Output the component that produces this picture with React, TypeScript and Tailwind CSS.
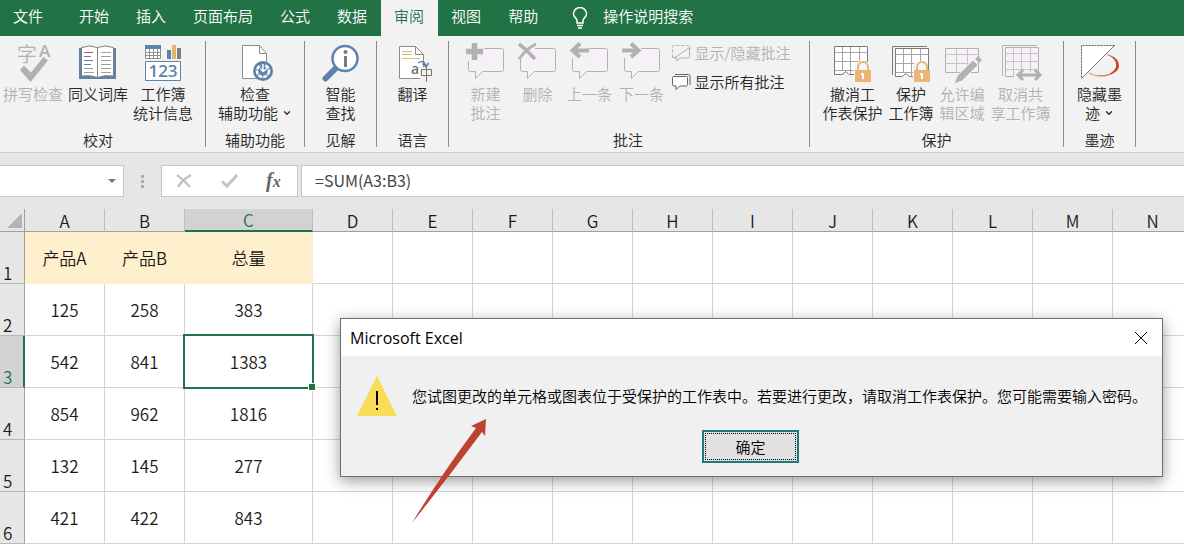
import React from 'react';
import { ChevronDown } from 'lucide-react';

const BLUE = '#5b83ab';
const GRAY = '#b1b1b1';

/* ---------- Ribbon icons ---------- */

const Icon: React.FC<{ children: React.ReactNode }> = ({ children }) => (
  <svg viewBox="0 0 40 40" className="w-10 h-10 shrink-0 overflow-visible" fill="none" aria-hidden="true">
    {children}
  </svg>
);

const SpellingIcon = () => (
  <Icon>
    <text x="4" y="19" fontSize="20" fill={GRAY} fontFamily="Noto Sans CJK SC, sans-serif">字</text>
    <text x="26" y="14" fontSize="17" fontWeight="600" fill={GRAY} fontFamily="Open Sans, sans-serif">A</text>
    <path d="M7 27l4-4.5 7 7L30.5 14l4.5 3.5L17.5 39z" fill={GRAY} />
  </Icon>
);

const ThesaurusIcon = () => (
  <Icon>
    <path d="M1 5h3v28h14l1.500 1 1.500-1h14V5h3v31H1z" fill={BLUE} />
    <path d="M3.500 4.500Q12 1.500 19.500 4.500Q27 1.500 35.500 4.500V33Q27 31.500 19.500 34.500Q12 31.500 3.500 33z" fill="#fff" stroke="#808080" />
    <path d="M19.500 4.500v30" stroke="#808080" />
    <path d="M6 9.500h9" stroke="#c0562f" />
    <path d="M6 13.500h7M6 17.500h9M6 21.500h7" stroke={BLUE} />
    <path d="M6 25.500h9M6 29.500h10M23 9.500h10M23 13.500h10M23 17.500h10M23 21.500h10M23 25.500h10M23 29.500h10" stroke="#a0a0a0" />
  </Icon>
);

const StatsIcon = () => (
  <Icon>
    <path d="M2.500 2.500h15v13h-15zM2.500 9.500h15M2.500 12.500h15M6.500 3v12M10.500 3v12M14.500 3v12" fill="#fff" stroke="#909090" />
    <path d="M2 2h16v4H2z" fill={BLUE} />
    <path d="M24 7h4v9h-4z" fill={BLUE} />
    <path d="M29 2h4v14h-4z" fill="#e8b170" />
    <path d="M34 5h4v11h-4z" fill="#808080" />
    <path d="M2.500 18.500h35v19h-35z" fill="#fff" stroke={BLUE} />
    <text x="20" y="34" fontSize="17" fontWeight="600" textAnchor="middle" fill={BLUE} fontFamily="Open Sans, sans-serif">123</text>
  </Icon>
);

const AccessibilityIcon = () => (
  <Icon>
    <path d="M7.500 2.500h17l7 8v25h-24z" fill="#fff" stroke="#8a8a8a" />
    <path d="M24.500 2.500v8h7" stroke="#8a8a8a" />
    <circle cx="28" cy="28" r="10" fill={BLUE} />
    <circle cx="28" cy="28" r="6" stroke="#fff" strokeWidth="2.500" strokeDasharray="4 1" />
    <path d="M24 19l4 8 3-8" fill={BLUE} />
    <path d="M28 21v7M25.500 25.500l2.500 3 4-3" stroke="#fff" strokeWidth="1.500" />
  </Icon>
);

const SmartLookupIcon = () => (
  <Icon>
    <path d="M4.500 35.500L15 25" stroke={BLUE} strokeWidth="6" strokeLinecap="round" />
    <circle cx="24" cy="15.500" r="12.500" fill="#fff" stroke={BLUE} strokeWidth="2.500" />
    <circle cx="24.500" cy="9" r="2" fill="#7a7a7a" />
    <path d="M24.500 13v11" stroke="#7a7a7a" strokeWidth="3" />
  </Icon>
);

const TranslateIcon = () => (
  <Icon>
    <path d="M6.500 3.500h16l8 8v24h-24z" fill="#fff" stroke="#8a8a8a" />
    <path d="M22.500 3.500v8h8" stroke="#8a8a8a" />
    <path d="M9 8.500h10M9 11.500h10M9 15.500h18" stroke="#e0b878" />
    <path d="M27 24h13v15H27z" fill="#f2f2f2" />
    <text x="18" y="31" fontSize="14" fontWeight="600" fill="#707070" fontFamily="Open Sans, sans-serif">a</text>
    <path d="M28.500 26.500h10v6h-10zM33.500 23v16" stroke="#7c7565" />
    <path d="M25 20q6-4 8 3M29.500 20.500l3.500 3.500 2.500-4" stroke={BLUE} strokeWidth="1.500" />
  </Icon>
);

const Bubble = () => (
  <path d="M4.500 5.500h31q2 0 2 2v19q0 2-2 2h-19l-7 7v-7h-5q-2 0-2-2v-19q0-2 2-2z" fill="#f5f1f7" stroke={GRAY} />
);

const NewCommentIcon = () => (
  <Icon>
    <Bubble />
    <path d="M0 3h18v15H0z" fill="#f2f2f2" />
    <path d="M8.500 0v17M0 8.500h17" stroke={GRAY} strokeWidth="5.500" />
  </Icon>
);

const DeleteCommentIcon = () => (
  <Icon>
    <Bubble />
    <path d="M1 3h16v12H1z" fill="#f2f2f2" />
    <path d="M1 1q8 6 16 15" stroke={GRAY} strokeWidth="3.500" />
    <path d="M18 1Q8 6 1 16" stroke={GRAY} strokeWidth="3" />
  </Icon>
);

const PreviousIcon = () => (
  <Icon>
    <Bubble />
    <path d="M0 4h19v11H0z" fill="#f2f2f2" />
    <path d="M19 7.500H3M10 .5L2.500 7.500l7.500 6.500" stroke={GRAY} strokeWidth="4" />
  </Icon>
);

const NextIcon = () => (
  <Icon>
    <Bubble />
    <path d="M0 4h19v11H0z" fill="#f2f2f2" />
    <path d="M0 7.500h16M9 .5l7.500 7L9 14" stroke={GRAY} strokeWidth="4" />
  </Icon>
);

const Lock = () => (
  <>
    <path d="M26 28v-4a5 5 0 0 1 10 0v4" stroke="#ecb476" strokeWidth="2" />
    <path d="M23 27h16v12H23z" fill="#ecb476" />
    <path d="M29 30h3v6h-2v-4h-1z" fill="#fff" />
  </>
);

const UnprotectSheetIcon = () => (
  <Icon>
    <path d="M2.500 3.500h33v28H17l-3-3-4 3H2.500z" fill="#fff" stroke="#7a7a7a" />
    <path d="M2.500 9.500h33M2.500 18.500h33M2.500 27.500h33M10.500 4v24M18.500 4v27M27.500 4v27" stroke="#a5a5a5" />
    <path d="M22 29v-7q2-4 9-4t6 4v14H22z" fill="#f6f6f6" />
    <Lock />
  </Icon>
);

const ProtectBookIcon = () => (
  <Icon>
    <path d="M1.500 32V3.500H36" stroke="#7a7a7a" />
    <path d="M4.500 5.500h33v28H18l-3-3-4 3H4.500z" fill="#fff" stroke="#7a7a7a" />
    <path d="M4.500 11.500h33M4.500 20.500h33M4.500 29.500h33M12.500 6v24M20.500 6v27M29.500 6v27" stroke="#a5a5a5" />
    <path d="M22 29v-7q2-4 9-4t6 4v14H22z" fill="#f6f6f6" />
    <Lock />
  </Icon>
);

const EditRangesIcon = () => (
  <Icon>
    <path d="M3.500 5.500h33v24h-33z" fill="#f5f1f7" stroke={GRAY} />
    <path d="M3.500 11.500h33M3.500 20.500h33M14.500 6v23M25.500 6v23" stroke="#c4c4c4" />
    <path d="M12 41l3-8L31 17l5 5-16 16z" fill={GRAY} stroke="#f2f2f2" />
    <path d="M33 16l3-3 4 4-3 3z" fill={GRAY} />
  </Icon>
);

const UnshareIcon = () => (
  <Icon>
    <path d="M1.500 33V2.500H36" stroke={GRAY} />
    <path d="M4.500 4.500h33v29h-33z" fill="#f5f1f7" stroke={GRAY} />
    <path d="M4.500 10.500h33M4.500 18.500h33M4.500 26.500h33M12.500 5v28M20.500 5v28M29.500 5v28" stroke="#c8c4ca" />
    <path d="M13 29h26v8H13z" fill="#f2f2f2" />
    <path d="M17 32h22M22 27l-5 5 5 5M34 27l5 5-5 5" stroke={GRAY} strokeWidth="3" />
  </Icon>
);

const HideInkIcon = () => (
  <Icon>
    <path d="M27 11q13 3 13 12c0 8-16 14-31 7 16 6 26 0 28-6 1-6-3-10-10-13z" fill="#c8452a" />
    <path d="M10 30q12 6 22 1" stroke="#e39a5f" />
    <path d="M2.500 2.500h33l-33 33z" fill="#fff" />
    <path d="M35.500 2.500h-33v33" stroke="#555" strokeDasharray="2 1" />
    <path d="M35.500 2.500l-33 33" stroke="#777" />
  </Icon>
);

/* ---------- Ribbon parts ---------- */

interface RibbonButtonProps {
  icon: React.ReactNode;
  lines: string[];
  disabled?: boolean;
  dropdown?: boolean;
  className?: string;
}

const RibbonButton: React.FC<RibbonButtonProps> = ({ icon, lines, disabled, dropdown, className = '' }) => (
  <button
    type="button"
    disabled={disabled}
    className={`flex flex-col items-center shrink-0 text-[15px] leading-[19px] whitespace-nowrap ${
      disabled ? 'text-[#b1b1b1]' : 'text-[#262626]'
    } ${className}`}
  >
    {icon}
    <span className="mt-px">{lines[0]}</span>
    {lines[1] && (
      <span className="flex items-center gap-1">
        {lines[1]}
        {dropdown && <ChevronDown className="w-2.5 h-2.5" strokeWidth={3} />}
      </span>
    )}
  </button>
);

interface GroupProps {
  title: string;
  className: string;
  children: React.ReactNode;
}

const Group: React.FC<GroupProps> = ({ title, className, children }) => (
  <section className={`flex flex-col items-center justify-between shrink-0 border-r border-[#8a8a8a] pt-0.5 ${className}`}>
    <div className="flex items-start">{children}</div>
    <h2 className="text-[15px] leading-[15px] font-[350] text-[#262626] whitespace-nowrap">{title}</h2>
  </section>
);

const TABS = ['开始', '插入', '页面布局', '公式', '数据', '审阅', '视图', '帮助'];

const TabBar = () => (
  <nav className="flex items-stretch h-9 bg-[#217346] text-white text-[15px] whitespace-nowrap overflow-hidden">
    <button type="button" className="px-[13px] pb-1 mr-2.5">文件</button>
    {TABS.map((tab) => (
      <button
        key={tab}
        type="button"
        className={`pl-[13px] pr-[14px] pb-1 ${tab === '审阅' ? 'bg-[#f2f2f2] text-[#217346]' : ''}`}
      >
        {tab}
      </button>
    ))}
    <button type="button" className="flex items-center gap-[15px] ml-5 pb-1">
      <svg viewBox="0 0 16 22" className="w-4 h-[22px] mt-1" fill="none" stroke="#fff" strokeWidth="1.500" aria-hidden="true">
        <path d="M5 16v-2.500C5 11 1.500 10.500 1.500 7a6.500 6.500 0 0 1 13 0c0 3.500-3.500 4-3.500 6.500V16zM5 18.500h6M6 21h4" />
      </svg>
      操作说明搜索
    </button>
  </nav>
);

const Ribbon = () => (
  <div className="flex items-stretch h-[117px] pt-[5px] pb-[5px] bg-[#f2f2f2] border-b border-[#cfcfcf] overflow-hidden">
    <Group title="校对" className="w-[206px] pl-[3px] pr-3">
      <div className="flex gap-[5px]">
        <RibbonButton icon={<SpellingIcon />} lines={['拼写检查']} disabled />
        <RibbonButton icon={<ThesaurusIcon />} lines={['同义词库']} />
        <RibbonButton icon={<StatsIcon />} lines={['工作簿', '统计信息']} />
      </div>
    </Group>
    <Group title="辅助功能" className="w-[99px]">
      <RibbonButton icon={<AccessibilityIcon />} lines={['检查', '辅助功能']} dropdown />
    </Group>
    <Group title="见解" className="w-[72px]">
      <RibbonButton icon={<SmartLookupIcon />} lines={['智能', '查找']} />
    </Group>
    <Group title="语言" className="w-[72px]">
      <RibbonButton icon={<TranslateIcon />} lines={['翻译']} />
    </Group>
    <Group title="批注" className="w-[361px] pr-0.5">
      <div className="flex pr-1.5">
        <RibbonButton icon={<NewCommentIcon />} lines={['新建', '批注']} disabled className="w-[52px]" />
        <RibbonButton icon={<DeleteCommentIcon />} lines={['删除']} disabled className="w-[52px]" />
        <RibbonButton icon={<PreviousIcon />} lines={['上一条']} disabled className="w-[52px]" />
        <RibbonButton icon={<NextIcon />} lines={['下一条']} disabled className="w-[52px]" />
        <div className="flex flex-col items-start gap-[9px] pl-1 text-[15px] leading-5 whitespace-nowrap">
          <button type="button" disabled className="flex items-center gap-1 text-[#b1b1b1]">
            <svg viewBox="0 0 19 16" className="w-[19px] h-4" fill="none" stroke={GRAY} aria-hidden="true">
              <path d="M17.500 3v9q0 1-1 1H8l-3 3v-3H2.500" fill="#f5f1f7" />
              <path d="M.5 12.500V2q0-1.500 1.500-1.500h16v3M.5 12.500h4" strokeDasharray="3 2" />
              <path d="M3 12.500L17.500 2.500" />
            </svg>
            显示/隐藏批注
          </button>
          <button type="button" className="flex items-center gap-1 text-[#262626]">
            <svg viewBox="0 0 19 16" className="w-[19px] h-4" fill="none" stroke="#666" aria-hidden="true">
              <path d="M3 .5h13.500q1.500 0 1.500 1.500v9" />
              <path d="M2 2.500h12.500q1 0 1 1v7q0 1.500-1 1.500H8l-4 3.500V12H2Q.5 12 .5 10.500v-7q0-1 1.500-1z" fill="#fff" />
            </svg>
            显示所有批注
          </button>
        </div>
      </div>
    </Group>
    <Group title="保护" className="w-[254px]">
      <div className="flex gap-1.5">
        <RibbonButton icon={<UnprotectSheetIcon />} lines={['撤消工', '作表保护']} />
        <RibbonButton icon={<ProtectBookIcon />} lines={['保护', '工作簿']} />
        <RibbonButton icon={<EditRangesIcon />} lines={['允许编', '辑区域']} disabled />
        <RibbonButton icon={<UnshareIcon />} lines={['取消共', '享工作簿']} disabled />
      </div>
    </Group>
    <Group title="墨迹" className="w-[72px]">
      <RibbonButton icon={<HideInkIcon />} lines={['隐藏墨', '迹']} dropdown />
    </Group>
  </div>
);

const FormulaBar = () => (
  <div className="flex items-stretch h-14 pt-3 pb-3 bg-[#e6e6e6]">
    <div className="flex items-center w-[124px] shrink-0 bg-white border border-l-0 border-[#c6c6c6]">
      <input aria-label="名称框" className="flex-1 min-w-0 px-2 outline-none" />
      <button type="button" aria-label="展开名称框" className="px-[7px]">
        <svg viewBox="0 0 8 4" className="w-2 h-1" aria-hidden="true">
          <path d="M0 0h8L4 4z" fill="#777" />
        </svg>
      </button>
    </div>
    <div className="flex flex-col items-center justify-center gap-[2px] w-[37px] shrink-0">
      <span className="w-[3px] h-[3px] bg-[#adadad]" />
      <span className="w-[3px] h-[3px] bg-[#adadad]" />
      <span className="w-[3px] h-[3px] bg-[#adadad]" />
    </div>
    <div className="flex items-center justify-around w-[137px] shrink-0 mr-[3px] pr-0.5 bg-white border border-[#c6c6c6]">
      <button type="button" aria-label="取消">
        <svg viewBox="0 0 16 14" className="w-4 h-3.5" fill="none" stroke="#bdbdbd" strokeWidth="2" aria-hidden="true">
          <path d="M1 1q7 5 13 12M15 1Q7 5 2 13" />
        </svg>
      </button>
      <button type="button" aria-label="输入">
        <svg viewBox="0 0 17 14" className="w-[17px] h-3.5" fill="none" stroke="#c4c4c4" strokeWidth="3" aria-hidden="true">
          <path d="M1 7.500l5 4.500L16 1" />
        </svg>
      </button>
      <button type="button" aria-label="插入函数" className="font-['Liberation_Serif',serif] italic font-bold text-xl leading-6 text-[#666]">
        f<span className="text-base">x</span>
      </button>
    </div>
    <input
      aria-label="编辑栏"
      defaultValue="=SUM(A3:B3)"
      className="flex-1 min-w-0 px-[13px] pb-0.5 bg-white border border-r-0 border-[#c6c6c6] text-base font-normal text-[#444] outline-none"
    />
  </div>
);

/* ---------- Sheet ---------- */

const COLUMNS = ['A', 'B', 'C', 'D', 'E', 'F', 'G', 'H', 'I', 'J', 'K', 'L', 'M', 'N'];

const ROWS = [
  ['产品A', '产品B', '总量'],
  ['125', '258', '383'],
  ['542', '841', '1383'],
  ['854', '962', '1816'],
  ['132', '145', '277'],
  ['421', '422', '843'],
];

const Sheet = () => (
  <table className="table-fixed w-[1193px] border-separate border-spacing-0 text-[17px] leading-6 text-[#1a1a1a]">
    <colgroup>
      <col className="w-[25px]" />
      {COLUMNS.map((c) => (
        <col key={c} className={c === 'C' ? 'w-32' : 'w-20'} />
      ))}
    </colgroup>
    <thead>
      <tr className="h-[23px] leading-[21px]">
        <th className="p-0 bg-[#e6e6e6] border-r border-b border-[#a0a0a0]">
          <svg viewBox="0 0 15 15" className="w-[15px] h-[15px] ml-auto mr-0.5" aria-hidden="true">
            <path d="M15 0v15H0z" fill="#b4b4b8" />
          </svg>
        </th>
        {COLUMNS.map((c) => (
          <th
            key={c}
            scope="col"
            className={`p-0 font-[350] border-r border-r-[#bdbdbd] ${
              c === 'C' ? 'bg-[#d2d2d2] text-[#217346] border-b-2 border-b-[#217346]' : 'bg-[#e6e6e6] border-b border-b-[#a0a0a0]'
            }`}
          >
            {c}
          </th>
        ))}
      </tr>
    </thead>
    <tbody>
      {ROWS.map((row, r) => (
        <tr key={r} className="h-[52px]">
          <th
            scope="row"
            className={`p-0 pl-[3px] align-bottom text-left font-[350] leading-5 border-b border-b-[#b8b8b8] ${
              r === 2 ? 'bg-[#d2d2d2] text-[#217346] border-r-2 border-r-[#217346]' : 'bg-[#e6e6e6] border-r border-r-[#a0a0a0]'
            }`}
          >
            {r + 1}
          </th>
          {COLUMNS.map((c, i) => {
            const filled = r === 0 && i < 3;
            const selected = r === 2 && i === 2;
            return (
              <td
                key={c}
                className={`relative p-0 text-center border-r border-b ${
                  filled ? 'bg-[#fff0cd] border-[#fff0cd]' : 'border-[#d4d4d4]'
                }`}
              >
                {row[i]}
                {selected && (
                  <>
                    <span className="absolute z-10 -inset-0.5 border-2 border-[#217346]" />
                    <span className="absolute z-10 -right-[3px] -bottom-[3px] w-1.5 h-1.5 bg-[#217346] outline outline-white" />
                  </>
                )}
              </td>
            );
          })}
        </tr>
      ))}
    </tbody>
  </table>
);

const AlertDialog = () => (
  <div
    role="alertdialog"
    aria-labelledby="alert-title"
    aria-describedby="alert-text"
    className="absolute z-20 left-[340px] top-[318px] w-[823px] border border-[#6e6e6e] bg-[#f0f0f0] text-black shadow-[0_4px_14px_rgba(0,0,0,0.4)]"
  >
    <div className="flex items-center justify-between h-[37px] pl-[9px] pr-3.5 bg-white">
      <h1 id="alert-title" className="font-['Open_Sans',sans-serif] font-normal text-base">Microsoft Excel</h1>
      <button type="button" aria-label="关闭">
        <svg viewBox="0 0 14 14" className="w-3.5 h-3.5" fill="none" stroke="#000" aria-hidden="true">
          <path d="M1 1l12 12M13 1L1 13" />
        </svg>
      </button>
    </div>
    <div className="flex items-center gap-[15px] pt-5 pl-4 pr-4">
      <svg viewBox="0 0 40 40" className="w-10 h-10 shrink-0" aria-hidden="true">
        <path d="M20 0l20 40H0z" fill="#fadd57" />
        <path d="M19 15h2v14h-2zM19 32h2v2h-2z" fill="#000" />
      </svg>
      <p id="alert-text" className="text-[15px] leading-5 whitespace-nowrap">
        您试图更改的单元格或图表位于受保护的工作表中。若要进行更改，请取消工作表保护。您可能需要输入密码。
      </p>
    </div>
    <div className="flex justify-center pt-3.5 pb-[13px] pr-0.5">
      <button type="button" className="w-[97px] h-[33px] p-px border-2 border-[#1d7b78] bg-[#e1e1e1] text-[15px] leading-5">
        <span className="flex items-center justify-center w-full h-full border border-dotted border-black">确定</span>
      </button>
    </div>
  </div>
);

const PointerArrow = () => (
  <svg viewBox="0 0 76 108" className="absolute z-30 left-[411px] top-[417px] w-[76px] h-[108px]" aria-hidden="true">
    <path d="M1 106Q30 58 65 11l-5-2L75 2l-1 17-3-4Q36 62 1 106z" fill="#bd4330" />
  </svg>
);

export default function App() {
  return (
    <main
      lang="zh-CN"
      className="relative min-h-screen overflow-hidden bg-white font-['Noto_Sans_CJK_SC',sans-serif] font-[350]"
    >
      <TabBar />
      <Ribbon />
      <FormulaBar />
      <Sheet />
      <AlertDialog />
      <PointerArrow />
    </main>
  );
}
